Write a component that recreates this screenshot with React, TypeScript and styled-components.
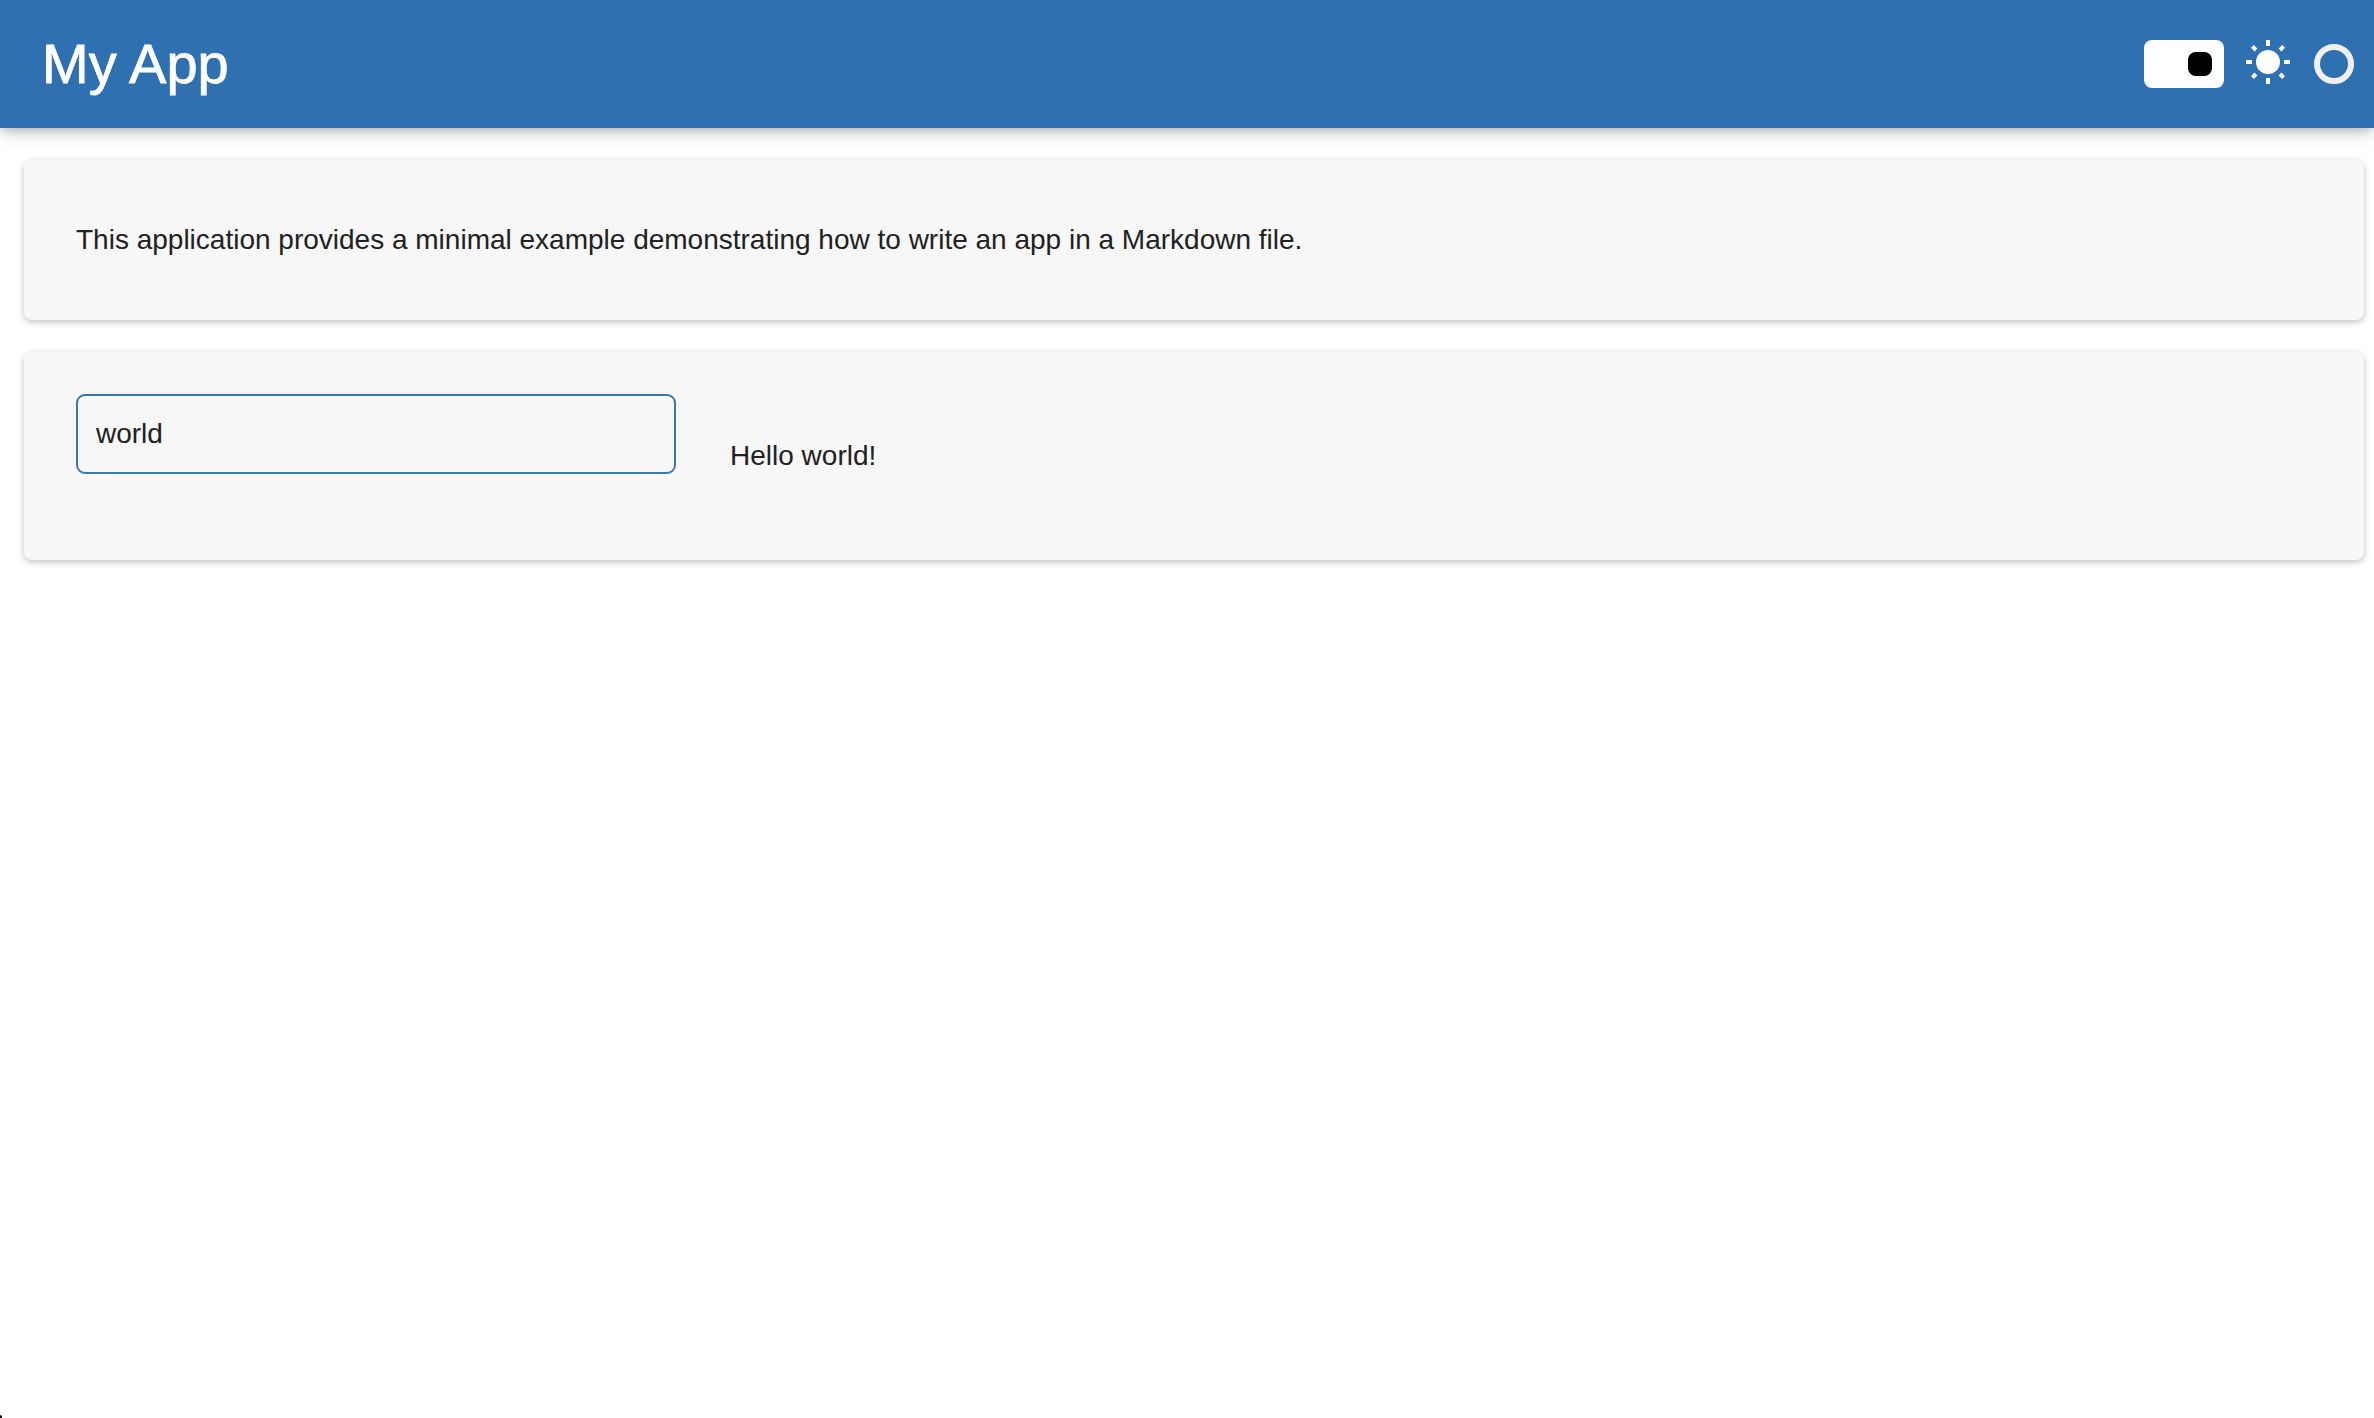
import React, { useState } from "react";
import styled, { createGlobalStyle } from "styled-components";

const GlobalStyle = createGlobalStyle`
  * { box-sizing: border-box; }
  html, body { margin: 0; padding: 0; background: #ffffff; }
  body {
    font-family: "Liberation Sans", Arial, sans-serif;
    font-size: 28px;
    color: #212121;
  }
`;

const Page = styled.div`
  min-height: 1418px;
  overflow: hidden;
`;

const Header = styled.header`
  display: flex;
  align-items: center;
  height: 128px;
  padding: 0 20px 0 42px;
  background: #2f70b1;
  color: #ffffff;
  box-shadow:
    0 4px 10px -2px rgba(0, 0, 0, 0.2),
    0 2px 20px rgba(0, 0, 0, 0.19);
`;

const Title = styled.h1`
  flex: 1;
  margin: 0;
  font-size: 56px;
  font-weight: 400;
  line-height: 64px;
  -webkit-text-stroke: 0.8px #ffffff;
`;

const Switch = styled.button`
  display: flex;
  align-items: center;
  justify-content: flex-end;
  width: 80px;
  height: 48px;
  padding: 0 12px;
  border: 0;
  border-radius: 8px;
  background: #ffffff;
`;

const Thumb = styled.span`
  width: 24px;
  height: 24px;
  border-radius: 8px;
  background: #000000;
`;

const SunIcon = styled.svg`
  width: 44px;
  height: 44px;
  margin: 0 24px 4px 22px;
  fill: #ffffff;
`;

const BusyRing = styled.span`
  width: 40px;
  height: 40px;
  border: 6px solid #f0f0f0;
  border-radius: 50%;
`;

const Main = styled.main`
  display: flex;
  flex-direction: column;
  gap: 32px;
  padding: 32px 10px 32px 24px;
`;

const Card = styled.section<{ $height: number }>`
  display: flex;
  align-items: flex-start;
  gap: 54px;
  height: ${(p) => p.$height}px;
  padding: 42px 52px;
  border-radius: 8px;
  background: #f7f7f7;
  box-shadow: 0 2px 6px rgba(0, 0, 0, 0.25);
`;

const Text = styled.p<{ $top: number }>`
  margin: ${(p) => p.$top}px 0 0;
  line-height: 42px;
`;

const Input = styled.input`
  width: 600px;
  height: 80px;
  padding: 0 18px;
  border: 2px solid #3878b5;
  border-radius: 9px;
  outline: 0;
  background: transparent;
  color: inherit;
  font: inherit;
`;

const WindowCorner = styled.span`
  position: fixed;
  left: 0;
  bottom: 0;
  width: 2px;
  height: 3px;
  border-top-right-radius: 2px;
  background: #111111;
`;

const RAY_ANGLES = [0, 45, 90, 135, 180, 225, 270, 315];

export default function App() {
  const [name, setName] = useState("world");

  return (
    <Page>
      <GlobalStyle />
      <Header>
        <Title>My App</Title>
        <Switch aria-label="Toggle theme">
          <Thumb />
        </Switch>
        <SunIcon viewBox="-22 -22 44 44" aria-hidden="true">
          <circle r="12" />
          {RAY_ANGLES.map((angle) => (
            <rect
              key={angle}
              x="-2"
              y="-22"
              width="4"
              height={angle % 90 === 0 ? 6 : 5}
              transform={`rotate(${angle})`}
            />
          ))}
        </SunIcon>
        <BusyRing />
      </Header>
      <Main>
        <Card $height={160}>
          <Text $top={17}>
            This application provides a minimal example demonstrating how to write an app in a Markdown file.
          </Text>
        </Card>
        <Card $height={208}>
          <Input value={name} onChange={(e) => setName(e.target.value)} />
          <Text $top={41}>Hello {name}!</Text>
        </Card>
      </Main>
      <WindowCorner />
    </Page>
  );
}
